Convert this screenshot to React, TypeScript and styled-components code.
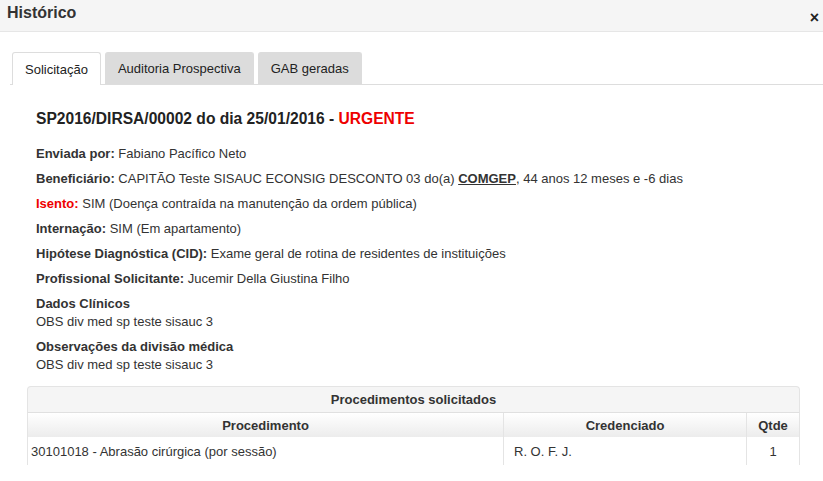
import React from 'react'
import styled, { createGlobalStyle } from 'styled-components'

const GlobalStyle = createGlobalStyle`
  html, body {
    margin: 0;
    padding: 0;
    background: #fff;
  }
  body {
    font-family: "Liberation Sans", Arial, sans-serif;
    font-size: 13px;
    color: #333;
  }
`

const Dialog = styled.div`
  width: 823px;
  height: 481px;
  overflow: hidden;
  background: #fff;
`

const Header = styled.div`
  height: 32px;
  box-sizing: border-box;
  background: #f5f5f5;
  border-bottom: 1px solid #e6e6e6;
  display: flex;
  align-items: flex-start;
  justify-content: space-between;
  padding: 4px 4px 0 7px;
`

const Title = styled.h3`
  margin: 0;
  font-size: 16px;
  line-height: 18px;
  font-weight: bold;
  color: #333;
`

const Close = styled.span`
  font-size: 16px;
  font-weight: bold;
  line-height: 15px;
  margin-top: 6px;
  color: #222;
`

const Body = styled.div`
  padding: 20px 0 0 10px;
`

const TabList = styled.div`
  display: flex;
  gap: 4px;
  padding-left: 2px;
  border-bottom: 1px solid #ddd;
`

const Tab = styled.div<{ $active?: boolean }>`
  box-sizing: border-box;
  padding: 0 12px;
  display: flex;
  align-items: center;
  border: 1px solid ${(p) => (p.$active ? '#ddd' : '#dcdcdc')};
  border-bottom: none;
  border-radius: 3px 3px 0 0;
  background: ${(p) => (p.$active ? '#fff' : '#dcdcdc')};
  margin-bottom: ${(p) => (p.$active ? '-1px' : '0')};
  height: ${(p) => (p.$active ? '33px' : '32px')};
  color: #222;
`

const Panel = styled.div`
  padding: 25px 23px 0 26px;
`

const Heading = styled.h4`
  margin: 0 0 17px;
  font-size: 15.6px;
  line-height: 18px;
  font-weight: bold;
  color: #222;
`

const Urgent = styled.span`
  color: #e00;
`

const Line = styled.p`
  margin: 0 0 7px;
  line-height: 18px;
`

const Label = styled.b<{ $alert?: boolean }>`
  color: ${(p) => (p.$alert ? '#e00' : '#333')};
`

const Org = styled.b`
  text-decoration: underline;
`

const Table = styled.table`
  margin: 12px 0 0 -9px;
  width: 773px;
  border-collapse: separate;
  border-spacing: 0;
`

const Caption = styled.th`
  height: 25px;
  padding: 0;
  background: #f5f5f5;
  border: 1px solid #e4e4e4;
  border-bottom-color: #e0e0e0;
  border-radius: 4px 4px 0 0;
  font-weight: bold;
  color: #333;
`

const Th = styled.th<{ $last?: boolean }>`
  height: 24px;
  padding: 0;
  background: linear-gradient(#fff, #ececec);
  border-left: 1px solid #e4e4e4;
  border-right: ${(p) => (p.$last ? '1px solid #e4e4e4' : 'none')};
  font-weight: bold;
  color: #333;
`

const Td = styled.td<{ $last?: boolean; $center?: boolean }>`
  height: 28px;
  padding: 0 10px 0 3px;
  border-left: 1px solid #e4e4e4;
  border-right: ${(p) => (p.$last ? '1px solid #e4e4e4' : 'none')};
  text-align: ${(p) => (p.$center ? 'center' : 'left')};
  color: #333;
`

export default function App() {
  return (
    <Dialog>
      <GlobalStyle />
      <Header>
        <Title>Histórico</Title>
        <Close>×</Close>
      </Header>
      <Body>
        <TabList>
          <Tab $active>Solicitação</Tab>
          <Tab>Auditoria Prospectiva</Tab>
          <Tab>GAB geradas</Tab>
        </TabList>
        <Panel>
          <Heading>
            SP2016/DIRSA/00002 do dia 25/01/2016 - <Urgent>URGENTE</Urgent>
          </Heading>
          <Line>
            <Label>Enviada por:</Label> Fabiano Pacífico Neto
          </Line>
          <Line>
            <Label>Beneficiário:</Label> CAPITÃO Teste SISAUC ECONSIG DESCONTO 03 do(a) <Org>COMGEP</Org>, 44 anos 12 meses e -6 dias
          </Line>
          <Line>
            <Label $alert>Isento:</Label> SIM (Doença contraída na manutenção da ordem pública)
          </Line>
          <Line>
            <Label>Internação:</Label> SIM (Em apartamento)
          </Line>
          <Line>
            <Label>Hipótese Diagnóstica (CID):</Label> Exame geral de rotina de residentes de instituições
          </Line>
          <Line>
            <Label>Profissional Solicitante:</Label> Jucemir Della Giustina Filho
          </Line>
          <Line>
            <Label>Dados Clínicos</Label>
            <br />
            OBS div med sp teste sisauc 3
          </Line>
          <Line>
            <Label>Observações da divisão médica</Label>
            <br />
            OBS div med sp teste sisauc 3
          </Line>
          <Table>
            <thead>
              <tr>
                <Caption colSpan={3}>Procedimentos solicitados</Caption>
              </tr>
              <tr>
                <Th style={{ width: 475 }}>Procedimento</Th>
                <Th style={{ width: 242 }}>Credenciado</Th>
                <Th $last>Qtde</Th>
              </tr>
            </thead>
            <tbody>
              <tr>
                <Td>30101018 - Abrasão cirúrgica (por sessão)</Td>
                <Td style={{ paddingLeft: 10 }}>R. O. F. J.</Td>
                <Td $last $center style={{ padding: 0 }}>1</Td>
              </tr>
            </tbody>
          </Table>
        </Panel>
      </Body>
    </Dialog>
  )
}
